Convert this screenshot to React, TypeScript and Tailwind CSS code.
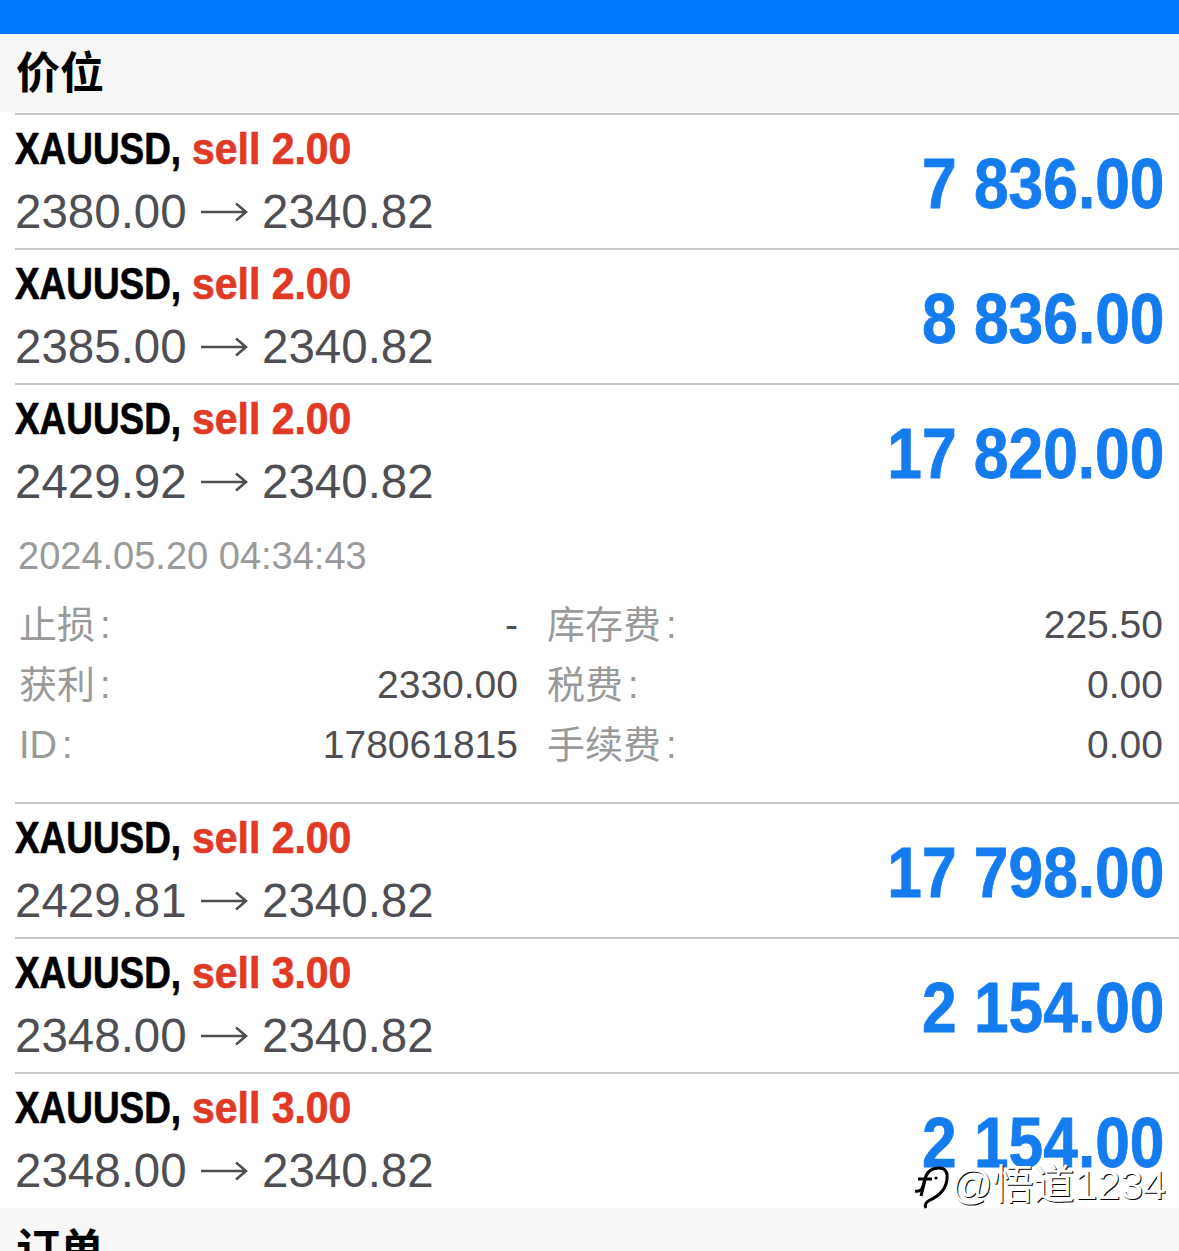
import React from 'react';

const latin = 'font-["Liberation_Sans","Noto_Sans_CJK_SC",sans-serif]';

type Position = { open: string; lots: string; profit: string };

const firstRows: Position[] = [
  { open: '2380.00', lots: '2.00', profit: '7 836.00' },
  { open: '2385.00', lots: '2.00', profit: '8 836.00' },
  { open: '2429.92', lots: '2.00', profit: '17 820.00' },
];

const lastRows: Position[] = [
  { open: '2429.81', lots: '2.00', profit: '17 798.00' },
  { open: '2348.00', lots: '3.00', profit: '2 154.00' },
  { open: '2348.00', lots: '3.00', profit: '2 154.00' },
];

const PositionRow = ({ row }: { row: Position }) => (
  <div className="ml-[15px] h-[135px] border-t-2 border-[#c8c8c8] flex items-center justify-between pr-[15px]">
    <div className="flex flex-col -mt-[1px]">
      <div className="flex items-baseline h-[62px] leading-[62px] text-[45px] font-bold whitespace-nowrap [-webkit-text-stroke:0.7px]">
        <span className="inline-block w-[177px] origin-left scale-x-[0.82] text-black">XAUUSD,</span>
        <span className="inline-block origin-left scale-x-[0.91] text-[#e03a26]">sell {row.lots}</span>
      </div>
      <div className="h-[64px] leading-[64px] text-[47.5px] text-[#4f4f53] whitespace-nowrap flex items-center">
        <span className="w-[186px]">{row.open}</span>
        <svg width="48" height="24" viewBox="0 0 48 24" className="mr-[14px] -ml-[1px]" fill="none" stroke="#4f4f53" strokeWidth="2.6">
          <path d="M1 12H46M36 3.5L46 12L36 20.5" />
        </svg>
        <span>2340.82</span>
      </div>
    </div>
    <div className="mt-[4px] origin-right scale-x-[0.89] text-[70px] font-bold text-[#157cf0] whitespace-nowrap leading-none [-webkit-text-stroke:0.8px]">
      {row.profit}
    </div>
  </div>
);

const DetailCell = ({ label, value }: { label: string; value: string }) => (
  <div className="flex justify-between items-center h-[60px] whitespace-nowrap">
    <span className="text-[#9a9a9a]">
      {label}
      <span className="ml-[5px]">:</span>
    </span>
    <span className="text-[#4f4f53] text-[39px] -mt-[2px]">{value}</span>
  </div>
);

const SectionHeader = ({ title, className = '' }: { title: string; className?: string }) => (
  <div className={`h-[77px] bg-[#f7f7f7] flex items-center pl-[16px] text-[44px] font-bold text-black leading-none ${className}`}>
    {title}
  </div>
);

export default function App() {
  return (
    <div className={`relative w-[1179px] h-[1251px] overflow-hidden bg-white ${latin}`}>
      <div className="h-[34px] bg-[#007aff]" />
      <div className="h-[1px] bg-[#eef6fd]" />
      <SectionHeader title="价位" />

      <div className="h-[1px]" />
      {firstRows.map((row, i) => (
        <PositionRow key={i} row={row} />
      ))}

      {/* expanded order */}
      <div className="h-[285px] -mt-[1px] flex flex-col pl-[19px] pr-[16px]">
        <div className="text-[38px] text-[#9a9a9a] leading-none -ml-[1px] pt-[20px] h-[78px]">2024.05.20 04:34:43</div>
        <div className="grid grid-cols-[499px_1fr] gap-x-[29px] text-[38px] leading-none">
          <DetailCell label="止损" value="-" />
          <DetailCell label="库存费" value="225.50" />
          <DetailCell label="获利" value="2330.00" />
          <DetailCell label="税费" value="0.00" />
          <DetailCell label="ID" value="178061815" />
          <DetailCell label="手续费" value="0.00" />
        </div>
      </div>

      {lastRows.map((row, i) => (
        <PositionRow key={i} row={row} />
      ))}

      <div className="h-[1px]" />
      <SectionHeader title="订单" className="pt-[8px]" />

      {/* watermark */}
      <div className="absolute left-[912px] top-[1158px] flex items-center text-[41px] leading-none text-white whitespace-nowrap [text-shadow:1px_1px_0_#000]">
        <svg width="40" height="54" viewBox="0 0 40 54" fill="none" strokeWidth="3">
          <path d="M3 33C8 34 10 32 11 28L14 18C16 13 21 10 27 10C33 10 36 14 35 21C34 31 27 38 18 42C14 44 12 47 14 50" stroke="#000" />
          <path d="M6 21H20M14 18L9 38" stroke="#000" />
          <circle cx="24" cy="20" r="1.6" fill="#000" />
        </svg>
        <span className="-ml-[1px]">@悟道1234</span>
      </div>
    </div>
  );
}
